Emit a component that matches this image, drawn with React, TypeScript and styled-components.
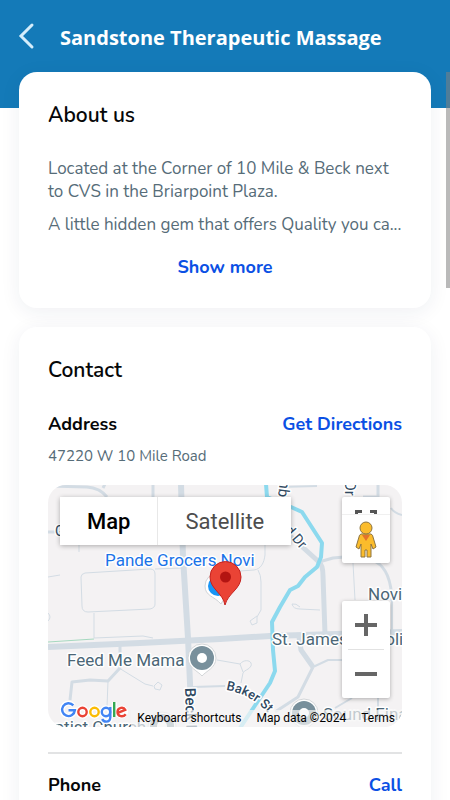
import React from "react";
import styled, { createGlobalStyle, css } from "styled-components";

const GlobalStyle = createGlobalStyle`
  *, *::before, *::after { box-sizing: border-box; }
  html { scrollbar-width: none; }
  body {
    margin: 0;
    background: #fff;
    color: #060708;
    font-family: "Nunito", Lato, sans-serif;
  }
  h1, h2, h3, p { margin: 0; }
  button { border: 0; padding: 0; background: none; font: inherit; cursor: pointer; }
`;

const Page = styled.div`
  min-height: 100vh;
`;

const Header = styled.header`
  display: flex;
  align-items: flex-start;
  height: 108px;
  padding: 20px 16px 0;
  background: #147ab8;
  color: #fff;
`;

const BackButton = styled.button`
  display: flex;
  align-items: center;
  width: 44px;
  height: 32px;
  color: #d5edfb;
`;

const Title = styled.h1`
  font: 700 20px/35px "Open Sans", sans-serif;
  white-space: nowrap;
`;

const ScrollThumb = styled.div`
  position: fixed;
  top: 72px;
  right: 0;
  width: 4px;
  height: 216px;
  background: rgba(128, 128, 128, 0.55);
`;

const Main = styled.main`
  display: flex;
  flex-direction: column;
  gap: 19px;
  margin-top: -36px;
  padding: 0 19px 24px;
`;

const Card = styled.section`
  padding: 29px;
  border-radius: 18px;
  background: #fff;
  box-shadow: 0 4px 20px rgba(30, 40, 90, 0.07);
`;

const CardTitle = styled.h2`
  font-size: 21px;
  font-weight: 600;
  line-height: 28px;
`;

const About = styled.div`
  display: flex;
  flex-direction: column;
  gap: 10px;
  margin-top: 28px;
  color: #566c78;
  font-size: 17px;
  line-height: 23px;
`;

const linkText = css`
  color: #0b50e4;
  font-size: 18px;
  font-weight: 700;
  line-height: 24px;
  text-decoration: none;
`;

const ShowMore = styled.button`
  ${linkText}
  display: block;
  margin: 19px auto 0;
`;

const ActionLink = styled.a`
  ${linkText}
`;

const Row = styled.div<{ $top: number }>`
  display: flex;
  justify-content: space-between;
  margin-top: ${(p) => p.$top}px;
`;

const Label = styled.h3`
  font-size: 18px;
  font-weight: 700;
  line-height: 24px;
`;

const Detail = styled.p`
  margin-top: 10px;
  color: #566c78;
  font-size: 15px;
  line-height: 20px;
`;

const MapFrame = styled.div`
  position: relative;
  height: 242px;
  margin-top: 19px;
  overflow: hidden;
  border-radius: 18px;
  background: #f4f2f3;
  font-family: Roboto, sans-serif;
`;

const MapCanvas = styled.svg`
  display: block;
  width: 100%;
  height: 100%;
`;

const TypeSwitch = styled.div`
  position: absolute;
  top: 12px;
  left: 12px;
  display: flex;
  border-radius: 2px;
  box-shadow: 0 1px 5px rgba(0, 0, 0, 0.3);
`;

const TypeButton = styled.button<{ $active?: boolean }>`
  height: 48px;
  padding: 0 27px;
  background: #fff;
  color: ${(p) => (p.$active ? "#000" : "#4d4d4d")};
  font-size: 22px;
  font-weight: ${(p) => (p.$active ? 500 : 400)};
  & + & { border-left: 1px solid #e8e8e8; }
`;

const Controls = styled.div`
  position: absolute;
  top: 12px;
  right: 12px;
  display: flex;
  flex-direction: column;
  justify-content: space-between;
  width: 48px;
  height: 201px;
`;

const ControlCard = styled.div`
  display: flex;
  flex-direction: column;
  align-items: center;
  border-radius: 2px;
  background: #fff;
  box-shadow: 0 1px 4px rgba(0, 0, 0, 0.3);
`;

const ControlButton = styled.button<{ $height: number }>`
  display: flex;
  align-items: center;
  justify-content: center;
  width: 100%;
  height: ${(p) => p.$height}px;
  overflow: hidden;
`;

const StreetViewButton = styled(ControlButton)`
  border-top: 1px solid #f0f0f0;
`;

const ControlRule = styled.div`
  width: 36px;
  height: 1px;
  background: #e2e2e2;
`;

const Attribution = styled.div`
  position: absolute;
  right: 0;
  bottom: 0;
  display: flex;
  gap: 15px;
  height: 17px;
  padding: 0 7px 0 6px;
  background: rgba(245, 245, 245, 0.7);
  color: #000;
  font-size: 12px;
  line-height: 17px;
  white-space: nowrap;
  a { color: inherit; text-decoration: none; }
`;

const GoogleMark = styled.a`
  position: absolute;
  left: 12px;
  bottom: 0;
  line-height: 0;
`;

const Divider = styled.hr`
  height: 2px;
  margin: 25px 0 0;
  border: 0;
  background: #e2e3e4;
`;

const Roads = () => (
  <g fill="none" stroke="#d3dce4" strokeLinejoin="round">
    <g strokeWidth="1">
      <path d="M37 88 102 84Q107 84 107 89V119Q107 123 102 124L40 127Q34 127 34 121L33 92Q33 89 37 88ZM107 84 133 83M46 128V153L95 151 105 153" />
      <path d="M31 56V67M0 92 12 90M60 196 59 222M71 183 97 199 105 201M106 201 110 197 114 200 112 205 107 204Z" />
      <path d="M169 175 192 179C197 173 205 176 203 181C201 185 196 185 195 188L193 198M192 179 195 187" />
      <path d="M217 60V70C216 78 213 84 206 85L192 86M210 85Q213 90 213 97V125L209 132 209 138 204 140 202 136 209 131M272 125 252 124Q245 124 244 119Q248 118 252 122M305 78 307 115M0 128Q4 132 0 136" />
    </g>
    <g strokeWidth="2">
      <path d="M145 202 177 201M232 2 269 1M343 23Q346 28 354 30" />
      <path d="M265 182 280 175H298M304 213 287 223M330 213V224M344 150V116" />
    </g>
    <path strokeWidth="3" d="M0 1 39 2Q52 3 59 12M57-1 55 3M105-1V13M0 47H7M72 160V183L60 196 42 195 24 197 22 215M271 77 285 73 296 72M328 77Q343 85 344 116M315 12H330V-1M265 182 250 212 227 227" />
    <path strokeWidth="5" d="M239 48 271 77Q275 80 275 91L277 149M251 152 253 165 265 182" />
    <path strokeWidth="6" d="M133-1 135 72 140 153 144 243M0 162 92 158 172 154 222 151 356 147" />
    <path stroke="#a5d8bf" strokeWidth="1" d="M0 157 46 154" />
    <path stroke="#8cd9ee" strokeWidth="4" d="M218-1 219 12 243 22 254 27 274 58 273 72 269 82 257 92 250 101 242 105 232 122 224 137 225 165 227 186 222 198 212 213 202 228 192 243" />
  </g>
);

const PlacePin = ({ x, y }: { x: number; y: number }) => (
  <g transform={`translate(${x} ${y})`}>
    <path d="M0 18C-4 13-14 10-14 0A14 14 0 0 1 14 0C14 10 4 13 0 18Z" fill="#fff" stroke="#d3d6d8" strokeWidth="1" />
    <circle r="12" fill="#78909c" />
    <circle r="5" fill="#fff" />
  </g>
);

const MapDrawing = () => (
  <MapCanvas viewBox="0 0 354 242" preserveAspectRatio="xMidYMid slice" role="img" aria-label="Map of 47220 W 10 Mile Road">
    <Roads />
    <defs>
      <path id="baker" d="M178 205Q204 209 224 232" />
    </defs>
    <PlacePin x={154} y={173} />
    <PlacePin x={256} y={228} />
    <PlacePin x={114} y={241} />
    <g fill="#4b6676" stroke="#fff" strokeWidth="3" strokeLinejoin="round" paintOrder="stroke" fontSize="17">
      <text x="19" y="181">Feed Me Mama</text>
      <text x="224" y="160">St. James</text>
      <text x="302" y="160">Catholic</text>
      <text x="320" y="115">Novi</text>
      <text x="275" y="235">Sound Financial</text>
      <text x="98" y="248" textAnchor="end">Baptist Church</text>
      <text x="57" y="81" fill="#1a73e8">Pande Grocers Novi</text>
    </g>
    <g fill="#304961" stroke="#fff" strokeWidth="3" strokeLinejoin="round" paintOrder="stroke" fontSize="14">
      <text x="7" y="51">G</text>
      <text transform="translate(137 203) rotate(88)" fontSize="15" fontWeight="500">Beck Rd</text>
      <text transform="translate(232 -5) rotate(97)" fontSize="15">nb</text>
      <text transform="translate(297 -4) rotate(90)" fontSize="15">Dr</text>
      <text transform="translate(233 42) rotate(49)">rd Dr</text>
      <text fontSize="13" fontWeight="500"><textPath href="#baker">Baker St</textPath></text>
    </g>
    <path d="M173 119C166 111 157 111 157 101A13 13 0 0 1 183 101Z" fill="#fff" stroke="#d0d3d6" />
    <circle cx="170" cy="101" r="10" fill="#1995f5" />
    <path d="M177 120C175 108 162 104 162 92A15.500 15.500 0 0 1 193 92C193 104 180 108 177 120Z" fill="#ea4335" stroke="#c5221f" />
    <circle cx="177.500" cy="92" r="5.500" fill="#b31412" />
  </MapCanvas>
);

const Pegman = () => (
  <svg width="22" height="37" viewBox="0 0 22 37" aria-hidden="true">
    <path d="M6 13H16Q18 14 18 16L21 26 18 28 16 23V36H12V29H10V36H6V23L4 28 1 26 4 16Q4 14 6 13Z" fill="#fbbc2c" stroke="#8d7440" strokeLinejoin="round" />
    <path d="M7 14H15L11 20Z" fill="#e3742b" />
    <circle cx="11" cy="7" r="6" fill="#fbbc2c" stroke="#8d7440" />
  </svg>
);

const GoogleLogo = () => (
  <svg width="68" height="27" viewBox="0 0 68 27" fill="none" aria-hidden="true">
    <g stroke="#fff" strokeWidth="5">
      <path d="M13.300 5.400A6.400 6.400 0 1 0 14.900 10.200H8.500" />
      <circle cx="22.500" cy="12" r="4.200" />
      <circle cx="34.500" cy="12" r="4.200" />
      <circle cx="46" cy="12" r="4.200" />
      <path d="M50.300 7V17.500Q50 21.600 46.200 21.600 43.200 21.600 42.200 19M54.200 2V17" />
      <circle cx="61.500" cy="12" r="4" />
    </g>
    <g strokeWidth="2.400">
      <path d="M13.300 5.400A6.400 6.400 0 1 0 14.900 10.200H8.500" stroke="#4285f4" />
      <circle cx="22.500" cy="12" r="4.200" stroke="#ea4335" />
      <circle cx="34.500" cy="12" r="4.200" stroke="#fbbc05" />
      <circle cx="46" cy="12" r="4.200" stroke="#4285f4" />
      <path d="M50.300 7V17.500Q50 21.600 46.200 21.600 43.200 21.600 42.200 19" stroke="#4285f4" />
      <path d="M54.200 2V17" stroke="#34a853" />
      <path d="M57.800 12.900 65.200 9.800C63.800 6.700 57.500 7.100 57.500 12S63.300 17.500 65.700 14.200" stroke="#ea4335" />
    </g>
  </svg>
);

const LocationMap = () => (
  <MapFrame>
    <MapDrawing />
    <Attribution>
      <span>Keyboard shortcuts</span>
      <span>Map data ©2024</span>
      <a href="#terms">Terms</a>
    </Attribution>
    <GoogleMark href="#google" aria-label="Google"><GoogleLogo /></GoogleMark>
    <TypeSwitch>
      <TypeButton $active>Map</TypeButton>
      <TypeButton>Satellite</TypeButton>
    </TypeSwitch>
    <Controls>
      <ControlCard>
        <ControlButton $height={17} aria-label="Toggle fullscreen view">
          <svg width="22" height="17" viewBox="0 0 22 17" aria-hidden="true">
            <path d="M1.500 17V14.500H7M15 14.500H20.500V17" fill="none" stroke="#555" strokeWidth="3" />
          </svg>
        </ControlButton>
        <StreetViewButton $height={49} aria-label="Street View"><Pegman /></StreetViewButton>
      </ControlCard>
      <ControlCard>
        <ControlButton $height={48} aria-label="Zoom in">
          <svg width="22" height="22" viewBox="0 0 22 22" aria-hidden="true">
            <path d="M0 11H22M11 0V22" stroke="#666" strokeWidth="4" />
          </svg>
        </ControlButton>
        <ControlRule />
        <ControlButton $height={48} aria-label="Zoom out">
          <svg width="22" height="22" viewBox="0 0 22 22" aria-hidden="true">
            <path d="M0 11H22" stroke="#666" strokeWidth="4" />
          </svg>
        </ControlButton>
      </ControlCard>
    </Controls>
  </MapFrame>
);

export default function App() {
  return (
    <Page>
      <GlobalStyle />
      <Header>
        <BackButton aria-label="Back">
          <svg width="20" height="28" viewBox="0 0 20 28" aria-hidden="true">
            <path d="M16 3 5 14 16 25" fill="none" stroke="currentColor" strokeWidth="3" strokeLinecap="round" />
          </svg>
        </BackButton>
        <Title>Sandstone Therapeutic Massage</Title>
      </Header>
      <Main>
        <Card>
          <CardTitle>About us</CardTitle>
          <About>
            <p>Located at the Corner of 10 Mile &amp; Beck next to CVS in the Briarpoint Plaza.</p>
            <p>A little hidden gem that offers Quality you ca...</p>
          </About>
          <ShowMore>Show more</ShowMore>
        </Card>
        <Card>
          <CardTitle>Contact</CardTitle>
          <Row $top={28}>
            <Label>Address</Label>
            <ActionLink href="#directions">Get Directions</ActionLink>
          </Row>
          <Detail>47220 W 10 Mile Road</Detail>
          <LocationMap />
          <Divider />
          <Row $top={19}>
            <Label>Phone</Label>
            <ActionLink href="#call">Call</ActionLink>
          </Row>
        </Card>
      </Main>
      <ScrollThumb />
    </Page>
  );
}
